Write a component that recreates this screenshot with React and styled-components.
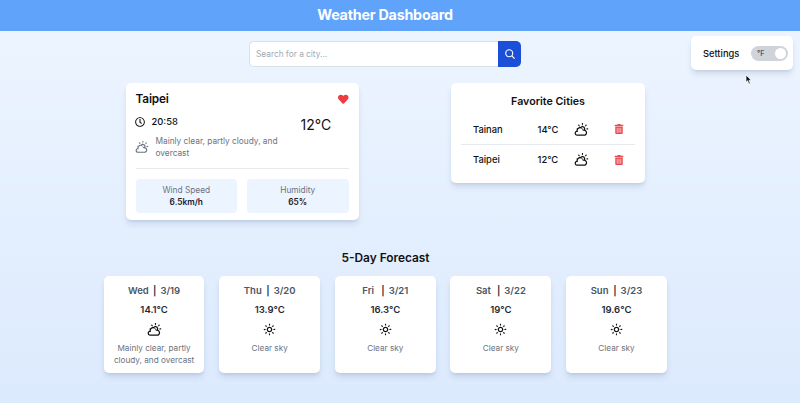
import React from "react";
import styled, { createGlobalStyle } from "styled-components";
import { TiWeatherPartlySunny, TiWeatherSunny } from "react-icons/ti";
import { FaHeart, FaTrashAlt, FaRegClock } from "react-icons/fa";
import { IoSearch } from "react-icons/io5";

const GlobalStyle = createGlobalStyle`
  *, *::before, *::after { box-sizing: border-box; }
  body { margin: 0; font-family: Inter, "Liberation Sans", sans-serif; color: #111; }
  h1, h2, h3, p { margin: 0; }
  svg { display: block; flex: none; }
`;

const Page = styled.div`
  position: relative;
  width: 800px;
  height: 403px;
  overflow: hidden;
  background: linear-gradient(#ecf4ff 31px, #dceafd);
`;

const Header = styled.header`
  height: 31px;
  padding-right: 30px;
  display: flex;
  align-items: center;
  justify-content: center;
  background: #60a3fb;
  color: #fff;
`;

const Title = styled.h1`
  font-size: 14.3px;
  line-height: 20px;
  font-weight: 700;
  letter-spacing: -0.22px;
  margin-top: -2px;
`;

const TopRow = styled.div`
  display: grid;
  grid-template-columns: 249px 272px 1fr;
  height: 52px;
`;

const SearchForm = styled.div`
  grid-column: 2;
  display: flex;
  height: 26px;
  margin-top: 10px;
`;

const SearchInput = styled.input`
  flex: 1;
  min-width: 0;
  padding: 0 6px;
  border: 1px solid #d9e1ea;
  border-right: 0;
  border-radius: 5px 0 0 5px;
  outline: 0;
  background: #fff;
  font: 400 8.3px Inter, sans-serif;
  &::placeholder { color: #a1a8b3; opacity: 1; }
`;

const SearchButton = styled.button`
  width: 23px;
  padding: 0;
  border: 0;
  border-radius: 0 5px 5px 0;
  display: grid;
  place-items: center;
  background: #1b4fd8;
  color: #fff;
  font-size: 12px;
`;

const Panel = styled.section`
  background: #fff;
  border-radius: 5px;
  box-shadow: 0 5px 6px -1px rgba(40, 70, 110, 0.13), 0 2px 3px -1px rgba(40, 70, 110, 0.11);
`;

const Settings = styled(Panel)`
  justify-self: end;
  width: 102px;
  height: 34px;
  margin: 5px 7px 0 0;
  padding: 0 5px 0 12px;
  display: flex;
  align-items: center;
  justify-content: space-between;
  font-size: 9.3px;
  font-weight: 500;
`;

const Toggle = styled.div`
  width: 37px;
  height: 15px;
  padding: 0 2px 0 6px;
  border-radius: 8px;
  display: flex;
  align-items: center;
  justify-content: space-between;
  background: #d0d3d9;
  color: #515967;
  font-size: 7px;
  font-weight: 600;
`;

const Knob = styled.span`
  width: 11px;
  height: 11px;
  border-radius: 50%;
  background: #fff;
`;

const Overview = styled.main`
  display: flex;
  align-items: flex-start;
  gap: 92.5px;
  height: 167px;
  padding-left: 125.5px;
`;

const Current = styled(Panel)`
  width: 233px;
  height: 136.5px;
  padding: 8px 10px 0;
`;

const CityRow = styled.div`
  display: flex;
  align-items: center;
  justify-content: space-between;
  height: 16px;
  color: #ef3b3e;
  font-size: 10.5px;
`;

const City = styled.h2`
  font-size: 11.8px;
  letter-spacing: -0.15px;
  font-weight: 600;
  color: #111;
`;

const Conditions = styled.div`
  display: flex;
  height: 61.5px;
  border-bottom: 1px solid #e6e9ee;
`;

const Details = styled.div`
  width: 165px;
`;

const Time = styled.div`
  display: flex;
  align-items: center;
  gap: 7px;
  height: 15px;
  margin: 7px 0 0 -1px;
  font-size: 9.4px;
  font-weight: 500;
`;

const Summary = styled.div`
  display: flex;
  align-items: center;
  gap: 7px;
  height: 24px;
  margin: 6px 0 0 -1px;
  color: #6b7280;
  font-size: 8.3px;
  line-height: 12px;
`;

const Temperature = styled.div`
  margin-top: 9px;
  font-size: 14px;
  line-height: 18px;
  font-weight: 400;
`;

const Stats = styled.div`
  display: grid;
  grid-template-columns: 1fr 1fr;
  gap: 10px;
  margin-top: 10px;
`;

const Stat = styled.div`
  height: 34px;
  padding-top: 5px;
  border-radius: 4px;
  background: #ecf4ff;
  color: #6b7280;
  text-align: center;
  font-size: 8.3px;
  line-height: 12px;
`;

const StatValue = styled.div`
  color: #1a202a;
  font-weight: 600;
`;

const Favorites = styled(Panel)`
  width: 194px;
  height: 100px;
  padding: 11px 10px 0;
`;

const FavoritesTitle = styled.h2`
  font-size: 10.7px;
  line-height: 16px;
  font-weight: 600;
  text-align: center;
  margin-bottom: 4px;
`;

const Favorite = styled.div`
  display: grid;
  grid-template-columns: 64.5px 36.5px 39.5px 1fr;
  align-items: center;
  height: 30px;
  padding-left: 12px;
  font-size: 9.4px;
  font-weight: 500;
  & + & { border-top: 1px solid #e6e9ee; }
`;

const Remove = styled.span`
  color: #e84b4f;
  font-size: 10px;
`;

const ForecastTitle = styled.h2`
  padding-right: 29px;
  height: 26px;
  font-size: 11.9px;
  line-height: 16px;
  font-weight: 600;
  text-align: center;
`;

const ForecastGrid = styled.div`
  display: grid;
  grid-template-columns: repeat(5, 100.8px);
  gap: 14.8px;
  padding-left: 103.7px;
`;

const Day = styled(Panel)`
  height: 96.5px;
  padding: 8px 4px 0;
  display: flex;
  flex-direction: column;
  align-items: center;
  text-align: center;
`;

const DayDate = styled.h3`
  display: flex;
  font-size: 9.5px;
  line-height: 14px;
  font-weight: 600;
  color: #4b5563;
`;

const DayName = styled.span`
  width: ${(p) => p.$width}px;
  text-align: left;
`;

const Divider = styled.span`
  margin-right: 4px;
  color: #1f2937;
`;

const DayTemp = styled.p`
  margin: 5px 0 6px;
  font-size: 9.5px;
  line-height: 13px;
  font-weight: 600;
  color: #1f2937;
`;

const DayText = styled.p`
  margin-top: 5px;
  font-size: 8.2px;
  line-height: 12px;
  color: #6b7280;
`;

const Pointer = styled.svg`
  position: absolute;
  left: 745px;
  top: 74px;
`;

const favorites = [
  { city: "Tainan", temp: "14°C" },
  { city: "Taipei", temp: "12°C" },
];

const days = [
  { name: "Wed", date: "3/19", temp: "14.1°C", text: "Mainly clear, partly cloudy, and overcast", cloudy: true, width: 25 },
  { name: "Thu", date: "3/20", temp: "13.9°C", text: "Clear sky", width: 22.5 },
  { name: "Fri", date: "3/21", temp: "16.3°C", text: "Clear sky", width: 19 },
  { name: "Sat", date: "3/22", temp: "19°C", text: "Clear sky", width: 21 },
  { name: "Sun", date: "3/23", temp: "19.6°C", text: "Clear sky", width: 22.5 },
];

export default function App() {
  return (
    <>
      <GlobalStyle />
      <Page>
        <Header>
          <Title>Weather Dashboard</Title>
        </Header>
        <TopRow>
          <SearchForm>
            <SearchInput placeholder="Search for a city..." />
            <SearchButton aria-label="Search">
              <IoSearch />
            </SearchButton>
          </SearchForm>
          <Settings>
            Settings
            <Toggle>
              °F
              <Knob />
            </Toggle>
          </Settings>
        </TopRow>
        <Overview>
          <Current>
            <CityRow>
              <City>Taipei</City>
              <FaHeart />
            </CityRow>
            <Conditions>
              <Details>
                <Time>
                  <FaRegClock size={10} />
                  20:58
                </Time>
                <Summary>
                  <TiWeatherPartlySunny size={14} />
                  <p>Mainly clear, partly cloudy, and overcast</p>
                </Summary>
              </Details>
              <Temperature>12°C</Temperature>
            </Conditions>
            <Stats>
              <Stat>
                Wind Speed
                <StatValue>6.5km/h</StatValue>
              </Stat>
              <Stat>
                Humidity
                <StatValue>65%</StatValue>
              </Stat>
            </Stats>
          </Current>
          <Favorites>
            <FavoritesTitle>Favorite Cities</FavoritesTitle>
            {favorites.map((f) => (
              <Favorite key={f.city}>
                <span>{f.city}</span>
                <span>{f.temp}</span>
                <TiWeatherPartlySunny size={15} />
                <Remove>
                  <FaTrashAlt />
                </Remove>
              </Favorite>
            ))}
          </Favorites>
        </Overview>
        <ForecastTitle>5-Day Forecast</ForecastTitle>
        <ForecastGrid>
          {days.map((d) => (
            <Day key={d.name}>
              <DayDate>
                <DayName $width={d.width}>{d.name}</DayName>
                <Divider>|</Divider>
                {d.date}
              </DayDate>
              <DayTemp>{d.temp}</DayTemp>
              {d.cloudy ? <TiWeatherPartlySunny size={15} /> : <TiWeatherSunny size={15} />}
              <DayText>{d.text}</DayText>
            </Day>
          ))}
        </ForecastGrid>
        <Pointer width="7" height="11" viewBox="0 0 7 11">
          <path d="M1 1v7.2l1.7-1.5L3.9 10l1.4-.6L4 6.3h2.2z" fill="#111" stroke="#fff" strokeWidth=".7" />
        </Pointer>
      </Page>
    </>
  );
}
